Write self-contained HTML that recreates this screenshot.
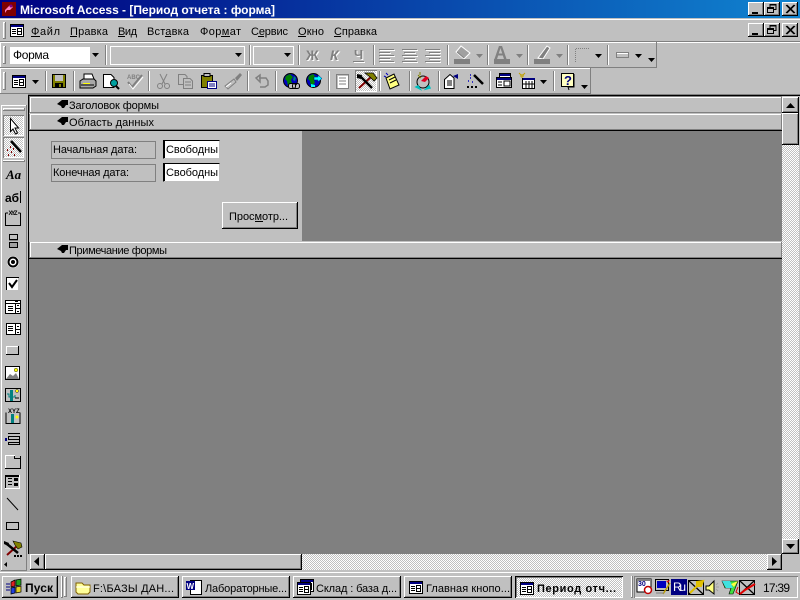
<!DOCTYPE html>
<html lang="ru"><head><meta charset="utf-8"><title>Microsoft Access</title>
<style>
html,body{margin:0;padding:0;width:800px;height:600px;overflow:hidden;background:#c0c0c0}
.a{position:absolute;box-sizing:border-box}
.b{position:absolute;box-sizing:border-box;background:#c0c0c0;box-shadow:inset -1px -1px #000,inset 1px 1px #fff,inset -2px -2px #808080}
.t{position:absolute;box-sizing:border-box;background:#c0c0c0;box-shadow:inset -1px -1px #808080,inset 1px 1px #fff}
.s{position:absolute;box-sizing:border-box;box-shadow:inset 1px 1px #808080,inset -1px -1px #fff}
.d{background-image:repeating-conic-gradient(#fff 0 25%,#c0c0c0 0 50%);background-size:2px 2px}
svg{position:absolute;left:0;top:0}
text{font-family:"Liberation Sans",sans-serif;font-size:11px;fill:#000}
</style></head><body>
<div class="a" style="left:0;top:0;width:800px;height:18px;background:linear-gradient(90deg,#000080,#1084d0)"></div>
<div class="a" style="left:0;top:19px;width:800px;height:1px;background:#fff"></div>
<div class="a" style="left:0;top:41px;width:800px;height:1px;background:#808080"></div>
<div class="a" style="left:0;top:42px;width:800px;height:1px;background:#fff"></div>
<!-- window controls -->
<div class="b" style="left:748px;top:2px;width:16px;height:14px"></div>
<div class="b" style="left:764px;top:2px;width:16px;height:14px"></div>
<div class="b" style="left:782px;top:2px;width:16px;height:14px"></div>
<div class="b" style="left:748px;top:23px;width:16px;height:14px"></div>
<div class="b" style="left:764px;top:23px;width:16px;height:14px"></div>
<div class="b" style="left:782px;top:23px;width:16px;height:14px"></div>
<!-- toolbars -->
<div class="t" style="left:0;top:42px;width:657px;height:26px"></div>
<div class="t" style="left:0;top:68px;width:591px;height:26px"></div>
<div class="a" style="left:0;top:94px;width:800px;height:1px;background:#808080"></div>
<!-- grips -->
<div class="t" style="left:3px;top:22px;width:3px;height:17px"></div>
<div class="t" style="left:3px;top:46px;width:3px;height:18px"></div>
<div class="t" style="left:3px;top:72px;width:3px;height:18px"></div>
<!-- seps row 2 -->
<div class="a" style="left:10px;top:47px;width:91px;height:17px;background:#fff"></div>
<div class="b" style="left:90px;top:47px;width:11px;height:17px;box-shadow:none"></div>
<div class="s" style="left:110px;top:46px;width:135px;height:19px;box-shadow:inset 1px 1px #fff,inset -1px -1px #fff"></div>
<div class="s" style="left:253px;top:46px;width:41px;height:19px;box-shadow:inset 1px 1px #fff,inset -1px -1px #fff"></div>
<!-- MDI -->
<div class="a" style="left:27px;top:95px;width:773px;height:476px;background:#c0c0c0"></div>
<div class="a" style="left:28px;top:95px;width:772px;height:1px;background:#000"></div>
<div class="a" style="left:28px;top:95px;width:1px;height:459px;background:#000"></div>
<div class="a" style="left:29px;top:96px;width:753px;height:458px;background:#808080"></div>
<div class="t" style="left:30px;top:97px;width:752px;height:16px"></div>
<div class="a" style="left:29px;top:113px;width:753px;height:1px;background:#c0c0c0"></div>
<div class="t" style="left:30px;top:114px;width:752px;height:16px"></div>
<div class="a" style="left:29px;top:130px;width:753px;height:1px;background:#000"></div>
<div class="a" style="left:29px;top:131px;width:273px;height:110px;background:#c0c0c0"></div>
<div class="a" style="left:29px;top:241px;width:753px;height:1px;background:#c0c0c0"></div>
<div class="t" style="left:30px;top:242px;width:752px;height:16px"></div>
<div class="a" style="left:29px;top:258px;width:753px;height:1px;background:#000"></div>
<!-- form controls -->
<div class="a" style="left:51px;top:141px;width:105px;height:18px;border:1px solid #808080"></div>
<div class="a" style="left:51px;top:164px;width:105px;height:18px;border:1px solid #808080"></div>
<div class="a" style="left:163px;top:140px;width:57px;height:19px;background:#fff;border:1px solid;border-color:#000 #c0c0c0 #c0c0c0 #000;box-shadow:inset 1px 0 #000"></div>
<div class="a" style="left:163px;top:163px;width:57px;height:19px;background:#fff;border:1px solid;border-color:#000 #c0c0c0 #c0c0c0 #000;box-shadow:inset 1px 0 #000"></div>
<div class="b" style="left:222px;top:202px;width:76px;height:27px"></div>
<!-- v scrollbar -->
<div class="a d" style="left:782px;top:97px;width:17px;height:457px"></div>
<div class="b" style="left:782px;top:97px;width:17px;height:16px"></div>
<div class="b" style="left:782px;top:113px;width:17px;height:32px"></div>
<div class="b" style="left:782px;top:539px;width:17px;height:15px"></div>
<!-- h scrollbar -->
<div class="a d" style="left:30px;top:554px;width:752px;height:16px"></div>
<div class="b" style="left:30px;top:554px;width:15px;height:16px"></div>
<div class="b" style="left:45px;top:554px;width:257px;height:16px"></div>
<div class="b" style="left:767px;top:554px;width:15px;height:16px"></div>
<!-- toolbox -->
<div class="a" style="left:0;top:94px;width:28px;height:477px;background:#c0c0c0"></div>
<div class="t" style="left:1px;top:105px;width:26px;height:466px"></div>
<div class="t" style="left:3px;top:108px;width:22px;height:3px"></div>
<div class="a d" style="left:3px;top:115px;width:21px;height:21px;box-shadow:inset 1px 1px #808080,inset -1px -1px #fff"></div>
<div class="a d" style="left:3px;top:137px;width:21px;height:21px;box-shadow:inset 1px 1px #808080,inset -1px -1px #fff"></div>
<div class="t" style="left:3px;top:160px;width:22px;height:2px"></div>
<!-- pressed tools -->
<div class="a d" style="left:355px;top:70px;width:22px;height:22px;box-shadow:inset 1px 1px #808080,inset -1px -1px #fff"></div>
<!-- taskbar -->
<div class="a" style="left:0;top:571px;width:800px;height:29px;background:#c0c0c0;border-top:1px solid #c0c0c0;box-shadow:inset 0 1px #fff"></div>
<div class="b" style="left:2px;top:576px;width:56px;height:22px"></div>
<div class="t" style="left:61px;top:576px;width:2px;height:22px"></div>
<div class="t" style="left:64px;top:577px;width:3px;height:20px"></div>
<div class="b" style="left:71px;top:576px;width:108px;height:22px"></div>
<div class="b" style="left:182px;top:576px;width:108px;height:22px"></div>
<div class="b" style="left:293px;top:576px;width:108px;height:22px"></div>
<div class="b" style="left:404px;top:576px;width:108px;height:22px"></div>
<div class="a d" style="left:515px;top:576px;width:108px;height:22px;box-shadow:inset 1px 1px #000,inset -1px -1px #fff,inset 2px 2px #808080"></div>
<div class="t" style="left:631px;top:576px;width:2px;height:22px"></div>
<div class="s" style="left:634px;top:576px;width:164px;height:22px"></div>

<svg width="800" height="600" viewBox="0 0 800 600" xmlns="http://www.w3.org/2000/svg">
<defs>
<g id="frm" shape-rendering="crispEdges"><rect x="0" y="0" width="14" height="13" fill="#000"/><rect x="1" y="1" width="12" height="2" fill="#000080"/><rect x="1" y="3" width="12" height="9" fill="#fff"/><path d="M2 5h4v1h-4zM2 7h4v1h-4zM2 9h4v1h-4z" fill="#000"/><path d="M7 4h5v1h-5zM7 7h5v1h-5zM7 10h5v1h-5zM7 4h1v7h-1zM11 4h1v7h-1z" fill="#000"/></g>
<path id="dn" d="M0 0h7l-3.500 4z" fill="#000"/>
<path id="dnd" d="M0 0h7l-3.500 4z" fill="#808080"/>
<path id="sec" d="M0 4L5 0H11V5H9L7 8H5L4 6Z" fill="#000"/>
<g id="sep"><rect x="0" y="0" width="1" height="20" fill="#808080"/><rect x="1" y="0" width="1" height="20" fill="#fff"/></g>
<g id="globe"><circle cx="7.500" cy="7.500" r="7" fill="#0000c0" stroke="#000"/><path d="M3 3L7 1L10 4L8 7L9 10L5 13L4 8L2 6Z" fill="#008000"/><path d="M11 3L13 5L12 8L10 7Z" fill="#008080"/></g>
<g id="env"><rect x="0" y="0" width="16" height="15" fill="#000"/><rect x="1" y="1" width="14" height="13" fill="#c0c0c0"/><path d="M1 1L15 14M15 1L1 14" stroke="#000" stroke-width="1.200" fill="none"/></g>
</defs>

<!-- title -->
<rect x="2" y="2" width="14" height="14" fill="#800000"/><path d="M5 10L10 5L13 7L10 10L7 10L5 13Z" fill="#ff80c0"/><circle cx="11" cy="6" r="1.500" fill="#800080"/>
<text x="20" y="14" textLength="255" lengthAdjust="spacing" style="font-size:12px;font-weight:bold;fill:#fff">Microsoft Access - [Период отчета : форма]</text>
<g shape-rendering="crispEdges">
<rect x="752" y="12" width="6" height="2" fill="#000"/>
<rect x="752" y="33" width="6" height="2" fill="#000"/>
<g id="rst"><rect x="770" y="4.500" width="6" height="5" fill="none" stroke="#000"/><rect x="770" y="4" width="6" height="1.500" fill="#000"/><rect x="767.500" y="7.500" width="6" height="5" fill="#c0c0c0" stroke="#000"/><rect x="767" y="7" width="7" height="2" fill="#000"/></g>
<use href="#rst" y="21"/>
</g>
<path d="M786 5L794 13M787 5L795 13M794 5L786 13M795 5L787 13" stroke="#000" fill="none"/>
<path d="M786 26L794 34M787 26L795 34M794 26L786 34M795 26L787 34" stroke="#000" fill="none"/>

<!-- menu -->
<use href="#frm" x="10" y="24"/>
<g>
<text x="31" y="35" textLength="29">Файл</text>
<text x="70" y="35" textLength="38">Правка</text>
<text x="118" y="35" textLength="19">Вид</text>
<text x="147" y="35" textLength="42">Вставка</text>
<text x="200" y="35" textLength="41">Формат</text>
<text x="251" y="35" textLength="37">Сервис</text>
<text x="298" y="35" textLength="26">Окно</text>
<text x="334" y="35" textLength="43">Справка</text>
</g>
<g fill="#000" shape-rendering="crispEdges">
<rect x="31" y="36" width="9" height="1"/><rect x="70" y="36" width="7" height="1"/><rect x="118" y="36" width="7" height="1"/><rect x="165" y="36" width="6" height="1"/><rect x="221" y="36" width="9" height="1"/><rect x="258" y="36" width="6" height="1"/><rect x="298" y="36" width="8" height="1"/><rect x="334" y="36" width="7" height="1"/>
</g>

<!-- row 2 -->
<text x="13" y="59" textLength="36" style="font-size:12px">Форма</text>
<use href="#dn" x="92" y="53"/>
<use href="#dn" x="235" y="53"/>
<use href="#dn" x="284" y="53"/>
<g shape-rendering="crispEdges">
<use href="#sep" x="105" y="45"/><use href="#sep" x="249" y="45"/><use href="#sep" x="298" y="45"/><use href="#sep" x="373" y="45"/><use href="#sep" x="447" y="45"/><use href="#sep" x="487" y="45"/><use href="#sep" x="527" y="45"/><use href="#sep" x="567" y="45"/><use href="#sep" x="607" y="45"/>
</g>
<text x="307" y="61" style="font-size:14px;font-weight:bold;fill:#fff">Ж</text><text x="306" y="60" style="font-size:14px;font-weight:bold;fill:#808080">Ж</text>
<text x="331" y="61" style="font-size:14px;font-weight:bold;font-style:italic;fill:#fff">К</text><text x="330" y="60" style="font-size:14px;font-weight:bold;font-style:italic;fill:#808080">К</text>
<text x="355" y="60" style="font-size:13px;font-weight:bold;fill:#fff">Ч</text><text x="354" y="59" style="font-size:13px;font-weight:bold;fill:#808080">Ч</text>
<rect x="354" y="62" width="11" height="1" fill="#fff" shape-rendering="crispEdges"/><rect x="353" y="61" width="11" height="1" fill="#808080" shape-rendering="crispEdges"/>
<g fill="#808080" shape-rendering="crispEdges">
<path d="M379 49h15v1h-15zM379 52h11v1h-11zM379 55h15v1h-15zM379 58h11v1h-11zM379 61h15v1h-15z"/>
<path d="M402 49h15v1h-15zM404 52h11v1h-11zM402 55h15v1h-15zM404 58h11v1h-11zM402 61h15v1h-15z"/>
<path d="M425 49h15v1h-15zM429 52h11v1h-11zM425 55h15v1h-15zM429 58h11v1h-11zM425 61h15v1h-15z"/>
</g>
<g fill="#fff" shape-rendering="crispEdges">
<path d="M380 50h15v1h-15zM380 53h11v1h-11zM380 56h15v1h-15zM380 59h11v1h-11zM380 62h15v1h-15z"/>
<path d="M403 50h15v1h-15zM405 53h11v1h-11zM403 56h15v1h-15zM405 59h11v1h-11zM403 62h15v1h-15z"/>
<path d="M426 50h15v1h-15zM430 53h11v1h-11zM426 56h15v1h-15zM430 59h11v1h-11zM426 62h15v1h-15z"/>
</g>
<!-- fill, font, line colours -->
<path d="M456 52L461 46L470 53L464 59Z" fill="#a0a0a0" stroke="#fff"/><path d="M457 52L464 58" stroke="#808080"/><rect x="454" y="59" width="16" height="5" fill="#808080" shape-rendering="crispEdges"/><use href="#dnd" x="476" y="54"/>
<text x="494" y="59" style="font-size:18px;font-weight:bold;fill:#808080">A</text><rect x="494" y="59" width="16" height="5" fill="#808080" shape-rendering="crispEdges"/><use href="#dnd" x="516" y="54"/>
<path d="M538 58L547 46L550 48L543 59Z" fill="#808080" stroke="#fff"/><rect x="534" y="59" width="16" height="5" fill="#808080" shape-rendering="crispEdges"/><use href="#dnd" x="556" y="54"/>
<path d="M575.500 62V48.500H589" fill="none" stroke="#808080" stroke-dasharray="1 1" shape-rendering="crispEdges"/><use href="#dn" x="595" y="54"/>
<rect x="616.500" y="52.500" width="12" height="5" fill="#c0c0c0" stroke="#808080" shape-rendering="crispEdges"/><path d="M617 53h11v1h-11z" fill="#fff"/><use href="#dn" x="635" y="54"/><use href="#dn" x="648" y="58"/>

<!-- row 3 -->
<use href="#frm" x="12" y="75"/><use href="#dn" x="32" y="80"/>
<g shape-rendering="crispEdges">
<use href="#sep" x="45" y="71"/><use href="#sep" x="73" y="71"/><use href="#sep" x="148" y="71"/><use href="#sep" x="247" y="71"/><use href="#sep" x="275" y="71"/><use href="#sep" x="328" y="71"/><use href="#sep" x="379" y="71"/><use href="#sep" x="409" y="71"/><use href="#sep" x="438" y="71"/><use href="#sep" x="489" y="71"/><use href="#sep" x="553" y="71"/>
<!-- save -->
<rect x="52" y="74" width="14" height="14" fill="#000"/><rect x="53" y="75" width="12" height="12" fill="#808000"/><rect x="55" y="75" width="8" height="6" fill="#c0c0c0"/><rect x="55" y="83" width="8" height="4" fill="#000"/><rect x="59" y="84" width="2" height="3" fill="#808000"/>
</g>
<!-- print -->
<path d="M84 74H92L94 79H84Z" fill="#fff" stroke="#000"/><path d="M80 81L83 79H94L96 81V86L93 88H80Z" fill="#a8a8a8" stroke="#000"/><rect x="83" y="83" width="7" height="1" fill="#ffff00"/><path d="M81 85h13" stroke="#000"/>
<!-- preview -->
<path d="M103.500 74.500H111L114 77.500V87.500H103.500Z" fill="#fff" stroke="#000"/><circle cx="114" cy="83" r="3.500" fill="#00a0a0" stroke="#000"/><path d="M116 86L119 89" stroke="#000" stroke-width="2"/>
<!-- spell -->
<text x="127" y="79" style="font-size:6px;font-weight:bold;fill:#808080">ABC</text><path d="M128 82L132 87L142 75" fill="none" stroke="#808080" stroke-width="2"/><path d="M129 84L133 89L143 77" fill="none" stroke="#fff"/>
<!-- cut -->
<path d="M160 74L165 84M167 74L162 84" stroke="#808080" fill="none"/><circle cx="160" cy="86" r="2.500" fill="none" stroke="#808080"/><circle cx="167" cy="86" r="2.500" fill="none" stroke="#808080"/>
<!-- copy -->
<path d="M178.500 74.500H185L187 76.500V84.500H178.500Z" fill="#c0c0c0" stroke="#808080"/><path d="M183.500 78.500H190L192.500 81V88.500H183.500Z" fill="#c0c0c0" stroke="#808080"/><path d="M185 82h6M185 85h6" stroke="#808080"/>
<!-- paste -->
<rect x="201.500" y="75.500" width="11" height="12" fill="#808000" stroke="#000"/><rect x="204" y="73.500" width="6" height="3" fill="#c0c0c0" stroke="#000"/><rect x="207.500" y="81.500" width="9" height="7" fill="#fff" stroke="#000080"/><path d="M209 84h6M209 86h6" stroke="#000080"/>
<!-- brush -->
<path d="M225 86L234 79L236 82L228 89Z" fill="#c0c0c0" stroke="#808080"/><path d="M235 78L240 73L242 75L237 81Z" fill="#808080"/><path d="M226 87L231 83" stroke="#fff"/>
<!-- undo -->
<path d="M256 78L260 75V82L256 78ZM259 78H266L268 81V85L265 87H260" fill="none" stroke="#808080" stroke-width="1.500"/>
<!-- globes -->
<use href="#globe" x="283" y="73"/><rect x="288.500" y="83.500" width="7" height="5" rx="2" fill="#c0c0c0" stroke="#000"/><rect x="292.500" y="83.500" width="7" height="5" rx="2" fill="none" stroke="#000"/>
<use href="#globe" x="306" y="73"/><path d="M314 77h4v-2l4 3.500-4 3.500v-2h-4z" fill="#00ffff" stroke="#000080" stroke-width=".5"/><path d="M311 89v-2h4v-2l-4-1z" fill="#00ffff"/>
<!-- list -->
<rect x="336.500" y="74.500" width="12" height="14" fill="#c0c0c0" stroke="#808080"/><rect x="338" y="76" width="10" height="12" fill="#fff"/><path d="M339 78h7M339 81h7M339 84h7" stroke="#808080" shape-rendering="crispEdges"/>
<!-- tools -->
<path d="M359 88L371 77" stroke="#800000" stroke-width="2"/><path d="M365 73L373 73L377 78L374 81L370 77Z" fill="#808000" stroke="#000" stroke-width=".8"/><path d="M360 76L372 88" stroke="#000" stroke-width="2.500"/><path d="M357 74L362 75L361 79L357 78Z" fill="#000"/>
<!-- note -->
<path d="M386 78L394 74L399 85L390 89Z" fill="#ffff80" stroke="#000"/><path d="M389 80L395 77M390 83L396 80" stroke="#000"/><path d="M386 73L388 75M384 76L386 77" stroke="#0000c0"/>
<!-- options -->
<circle cx="423" cy="82" r="6" fill="#c0c0c0" stroke="#000"/><path d="M418 75L421 78M420 72v3" stroke="#808000"/><path d="M421 81L426 76L429 78L425 82Z" fill="#e00020"/><path d="M416 87L420 89L418 86Z M429 86L426 89L430 88Z" fill="#00c0c0" stroke="#00c0c0" stroke-width="1.500"/>
<!-- properties -->
<path d="M444.500 79.500L450 74.500L454 78V88.500H444.500Z" fill="#fff" stroke="#000"/><path d="M447 81h5M447 83h5M447 85h5" stroke="#000"/><path d="M453 76L458 74V79Z" fill="#000080"/>
<!-- wand -->
<path d="M474 75L483 84" stroke="#000" stroke-width="2.500"/><path d="M470 78h1M468 81h1M472 82h1M470 75h1" stroke="#0000c0" stroke-width="1.500"/><path d="M467 87h2M471 87h2M475 87h2" stroke="#000" stroke-width="2"/>
<!-- windows -->
<g shape-rendering="crispEdges"><rect x="499.500" y="73.500" width="11" height="9" fill="#fff" stroke="#000"/><rect x="500" y="74" width="10" height="2" fill="#000080"/><rect x="496.500" y="77.500" width="15" height="10" fill="#fff" stroke="#000"/><rect x="497" y="78" width="14" height="2" fill="#000080"/><path d="M498 82h4M498 85h4M504 81h6v5h-6z" fill="none" stroke="#000"/></g>
<!-- new object -->
<g shape-rendering="crispEdges"><rect x="522.500" y="78.500" width="12" height="10" fill="#fff" stroke="#000"/><rect x="523" y="78" width="12" height="2" fill="#000080"/><path d="M526 81v7M529 81v7M532 81v7M523 84h11" stroke="#000"/></g><path d="M520 76h4M522 74v4M519 73l2 2M525 73l-2 2" stroke="#c0a000"/>
<use href="#dn" x="540" y="80"/>
<!-- help -->
<rect x="561.500" y="73.500" width="12" height="13" fill="#ffffc0" stroke="#000"/><path d="M574 74v13h-6l1 3" fill="none" stroke="#000"/><text x="564" y="85" style="font-size:13px;font-weight:bold;fill:#000080">?</text>
<use href="#dn" x="581" y="85"/>

<!-- sections -->
<use href="#sec" x="57" y="100"/><text x="69" y="109" textLength="90">Заголовок формы</text>
<use href="#sec" x="57" y="117"/><text x="69" y="126" textLength="85">Область данных</text>
<use href="#sec" x="57" y="245"/><text x="69" y="254" textLength="98">Примечание формы</text>
<!-- form text -->
<text x="53" y="153" textLength="84">Начальная дата:</text>
<text x="53" y="176" textLength="76">Конечная дата:</text>
<text x="166" y="153" textLength="52">Свободны</text>
<text x="166" y="176" textLength="52">Свободны</text>
<text x="229" y="220" textLength="59">Просмотр...</text>
<rect x="255" y="221" width="8" height="1" fill="#000" shape-rendering="crispEdges"/>
<!-- scroll arrows -->
<path d="M786 108h9l-4.500-5z" fill="#000"/>
<path d="M786 544h9l-4.500 5z" fill="#000"/>
<path d="M39 557v9l-5-4.500z" fill="#000"/>
<path d="M772 557v9l5-4.500z" fill="#000"/>

<!-- toolbox icons -->
<path d="M10.500 118.500V131.500L13 129L15.500 134L17.500 133L15 128H18.500Z" fill="#fff" stroke="#000"/>
<path d="M11 141L21 152" stroke="#000" stroke-width="2.500"/><path d="M7 150h1M10 147h1M11 152h1M8 155h1M14 155h1M13 149h1" stroke="#800000" stroke-width="2"/>
<text x="6" y="179" style="font-family:'Liberation Serif',serif;font-size:13px;font-weight:bold;font-style:italic">Aa</text>
<text x="5" y="202" textLength="14" style="font-size:12px;font-weight:bold">аб</text><rect x="20" y="191" width="1" height="12" fill="#000" shape-rendering="crispEdges"/>
<path d="M5.500 213V225.500H20.500V213M5.500 213H8M18 213H20.500" fill="none" stroke="#000" shape-rendering="crispEdges"/><text x="8.500" y="215" textLength="9" style="font-size:6px;font-weight:bold">XYZ</text>
<g shape-rendering="crispEdges">
<rect x="9.500" y="234.500" width="8" height="5" fill="#c0c0c0" stroke="#000"/><path d="M9 240h9v1h-9z" fill="#808080"/>
<rect x="9.500" y="242.500" width="8" height="5" fill="#a0a0a0" stroke="#000"/>
</g>
<circle cx="13" cy="262" r="6" fill="#fff"/><circle cx="13" cy="262" r="4.500" fill="#fff" stroke="#000" stroke-width="2"/><circle cx="13" cy="262" r="2" fill="#000"/>
<g shape-rendering="crispEdges">
<rect x="7" y="278" width="12" height="12" fill="#fff"/><path d="M6 277h13v1h-13zM6 277h1v13h-1z" fill="#000"/><rect x="18" y="278" width="1" height="12" fill="#c0c0c0"/>
</g>
<path d="M9 283L12 287L17 280" fill="none" stroke="#000" stroke-width="2"/>
<!-- combo / list / button / image -->
<g shape-rendering="crispEdges">
<rect x="5.500" y="300.500" width="15" height="13" fill="#fff" stroke="#000"/>
<path d="M6 303h14v1h-14zM15 304h1v9h-1zM8 306h5v1h-5zM8 308h5v1h-5zM8 310h5v1h-5zM16 308h4v1h-4zM17 305h2v1h-2zM17 311h2v1h-2z" fill="#000"/><path d="M15 301h3v1h-3z" fill="#000"/>
<rect x="6.500" y="323.500" width="14" height="11" fill="#fff" stroke="#000"/>
<path d="M15 324h1v11h-1zM16 329h4v1h-4zM8 326h5v1h-5zM8 328h5v1h-5zM8 330h5v1h-5zM17 326h2v1h-2zM17 332h2v1h-2z" fill="#000"/>
<rect x="6" y="346" width="13" height="8" fill="#c0c0c0"/><path d="M6 346h13v1h-13zM6 346h1v8h-1z" fill="#fff"/><path d="M6 354h13v1h-13zM18 346h1v9h-1z" fill="#000"/>
<rect x="5.500" y="366.500" width="14" height="13" fill="#fff" stroke="#000"/>
</g>
<path d="M6 379L10 374L13 376L16 373L19 379Z" fill="#808080"/><circle cx="16" cy="370" r="1.800" fill="#ffff00" stroke="#000" stroke-width=".4"/>
<rect x="5.500" y="388.500" width="15" height="13" fill="#c0c0c0" stroke="#000" shape-rendering="crispEdges"/><rect x="10" y="390" width="3" height="11" fill="#008080"/><path d="M7 394h2v3h6v-2" stroke="#008080" fill="none"/><circle cx="17" cy="391" r="1.500" fill="#ffff00" stroke="#000" stroke-width=".4"/><path d="M15 398h4" stroke="#000"/>
<path d="M6 412.500V423.500H20V412.500" fill="#c0c0c0" stroke="#000" shape-rendering="crispEdges"/><text x="8" y="413" style="font-size:6px;font-weight:bold">XYZ</text><rect x="11" y="414" width="3" height="9" fill="#008080"/><circle cx="17" cy="417" r="1.500" fill="#ffff00"/>
<g shape-rendering="crispEdges">
<path d="M8 433h12v1h-12zM8 436h12v1h-12zM8 439h12v1h-12zM8 442h12v1h-12zM8 444h12v1h-12zM19 436h1v9h-1zM8 436h1v3h-1zM8 442h1v3h-1z" fill="#000"/>
<rect x="5" y="438" width="2" height="3" fill="#000080"/>
<path d="M6 455h8v-1h1v3h6v11h-15z" fill="#c0c0c0"/>
<path d="M5 455h10v1h-10zM5 455h1v3h-1z" fill="#fff"/><path d="M5 468h16v1h-16zM20 456h1v13h-1zM14 456h1v2h-1zM14 458h6v1h-6z" fill="#000"/><path d="M5 456h1v12h-1z" fill="#fff"/>
<rect x="5" y="475" width="15" height="14" fill="#808080"/><rect x="6" y="476" width="14" height="13" fill="#c0c0c0"/><rect x="5" y="475" width="15" height="2" fill="#000"/><rect x="5" y="475" width="1" height="13" fill="#000"/><rect x="19" y="475" width="1" height="14" fill="#fff"/><rect x="5" y="488" width="15" height="1" fill="#fff"/>
<path d="M8 478h4v1h-4zM8 481h4v1h-4zM8 484h4v1h-4zM14 478h4v3h-4zM14 483h4v3h-4z" fill="#000"/>
<rect x="6.500" y="522.500" width="12" height="7" fill="none" stroke="#000"/>
</g>
<path d="M7 498L18 510" stroke="#000" fill="none"/>
<path d="M7 555L17 546" stroke="#800000" stroke-width="2"/><path d="M13 541L21 543L22 547L18 549L15 545Z" fill="#808000" stroke="#000" stroke-width=".6"/><path d="M7 544L18 553" stroke="#000" stroke-width="2.500"/><path d="M4 541L9 543L8 546L4 544Z" fill="#000"/><path d="M14 556h2M17 556h2M20 556h2" stroke="#000" stroke-width="2"/>
<path d="M7 562v5l-3-2.500z" fill="#000"/>

<!-- taskbar contents -->
<path d="M11 582L15 580V586L11 587Z" fill="#e02020" stroke="#000" stroke-width=".7"/><path d="M16 580L21 579V585L16 586Z" fill="#20a020" stroke="#000" stroke-width=".7"/><path d="M11 588L15 587V593L11 594Z" fill="#2040e0" stroke="#000" stroke-width=".7"/><path d="M16 587L21 586V592L16 593Z" fill="#e0d020" stroke="#000" stroke-width=".7"/><path d="M6 584h4M6 587h4M6 590h4" stroke="#000080"/>
<text x="25" y="592" textLength="28" style="font-size:12px;font-weight:bold">Пуск</text>
<path d="M76 583H82L84 585H90V592L88 594H78L76 592Z" fill="#ffff99" stroke="#806000"/><path d="M76 587H90" stroke="#fff"/>
<text x="93" y="592" textLength="81">F:\БАЗЫ ДАН...</text>
<rect x="190.500" y="580.500" width="11" height="14" fill="#fff" stroke="#000"/><rect x="186" y="581" width="9" height="9" fill="#000080"/><text x="186.500" y="589" style="font-size:8px;font-weight:bold;fill:#fff">W</text>
<text x="205" y="592" textLength="82">Лабораторные...</text>
<use href="#frm" x="300" y="579"/><use href="#frm" x="297" y="582"/>
<text x="316" y="592" textLength="81">Склад : база д...</text>
<use href="#frm" x="409" y="581"/>
<text x="426" y="592" textLength="84">Главная кнопо...</text>
<use href="#frm" x="520" y="582"/>
<text x="537" y="592" textLength="79" style="font-weight:bold">Период отч...</text>

<!-- tray -->
<rect x="637" y="579" width="14" height="13" fill="#fff" stroke="#000"/><rect x="637" y="579" width="14" height="2" fill="#808080"/><text x="638" y="586" style="font-size:7px;font-weight:bold;fill:#000080">30</text><circle cx="648" cy="590" r="3.500" fill="#fff" stroke="#c00000" stroke-width="1.500"/>
<rect x="655.500" y="579.500" width="13" height="11" fill="#c0c0c0" stroke="#000"/><rect x="657" y="581" width="9" height="7" fill="#0000c0"/><path d="M666 581L670 580L668 583Z" fill="#e02020"/><path d="M663 594L670 583" stroke="#c0a000" stroke-width="1.500"/><path d="M656 593h8" stroke="#808080"/>
<rect x="671" y="579" width="16" height="16" fill="#000080" shape-rendering="crispEdges"/><text x="673" y="591" textLength="13" style="font-size:12px;fill:#fff">Ru</text>
<use href="#env" x="688" y="580"/><path d="M690 593L699 584M697 582L703 581L701 586L697 586Z" stroke="#e0c000" fill="#e0c000" stroke-width="2"/>
<path d="M706 586H709L714 581V594L709 590H706Z" fill="#ffff80" stroke="#000"/><path d="M716 587H719M716 585L718 583M716 589L718 591" stroke="#a0a0a0"/>
<path d="M722 581H738L733 594H729L731 588H725Z" fill="#40e040" stroke="#000" stroke-width=".6"/><path d="M722 581H730L733 588H726Z" fill="#40e0e0"/><path d="M731 584L738 581L734 587Z" fill="#ffff40"/><path d="M738 587L736 592L739 594" stroke="#e00000" fill="none"/>
<use href="#env" x="739" y="580"/><path d="M740 594L745 590L755 584" stroke="#e00000" stroke-width="2" fill="none"/>
<text x="763" y="592" textLength="27" style="font-size:12px">17:39</text>
</svg>
</body></html>
